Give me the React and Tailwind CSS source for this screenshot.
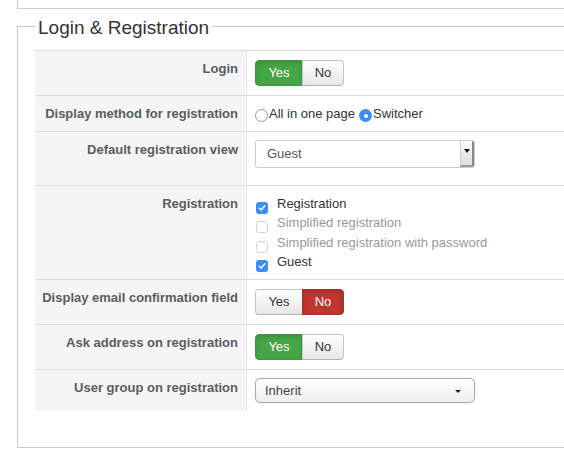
import React from "react";

const font = { fontFamily: '"Liberation Sans", Arial, Helvetica, sans-serif' };

function Toggle({ value }) {
  const yesOn = value === "yes";
  const base =
    "h-[26px] flex items-center justify-center text-[13px] border";
  const off =
    "bg-gradient-to-b from-[#ffffff] to-[#e6e6e6] border-[#c5c5c5] border-b-[#b3b3b3] text-[#333] shadow-[inset_0_1px_0_rgba(255,255,255,0.2)]";
  return (
    <div className="flex">
      <div
        className={`${base} w-[48px] rounded-l-[4px] ${
          yesOn
            ? "bg-[#46a546] border-[#3e963e] text-white shadow-[inset_0_2px_4px_rgba(0,0,0,0.15)]"
            : off
        }`}
      >
        Yes
      </div>
      <div
        className={`${base} w-[42px] -ml-px rounded-r-[4px] ${
          !yesOn
            ? "bg-[#bd362f] border-[#a8302a] text-white shadow-[inset_0_2px_4px_rgba(0,0,0,0.15)]"
            : off
        }`}
      >
        No
      </div>
    </div>
  );
}

function Checkbox({ checked, label }) {
  return (
    <div className="flex items-start h-[19.33px] leading-[19.33px]">
      {checked ? (
        <span className="mt-[8px] ml-[1px] w-[12px] h-[12px] rounded-[3px] bg-[#3b8ef7] flex items-center justify-center">
          <svg width="8" height="8" viewBox="0 0 8 8">
            <path d="M1.3 4.2 L3.2 6 L6.8 1.8" fill="none" stroke="#fff" strokeWidth="1.4" strokeLinecap="round" strokeLinejoin="round" />
          </svg>
        </span>
      ) : (
        <span className="mt-[8px] ml-[1px] w-[12px] h-[12px] rounded-[3px] bg-white border border-[#d4d4d4]" />
      )}
      <span className={`ml-[9px] text-[13px] ${checked ? "text-[#333]" : "text-[#999]"}`}>
        {label}
      </span>
    </div>
  );
}

function Row({ label, h, first, last, children }) {
  return (
    <div
      className={`flex ${h} ${first ? "border-t border-[#dddddd]" : ""} ${
        last ? "" : "border-b border-[#dddddd]"
      }`}
    >
      <div className="w-[212px] shrink-0 bg-[#f5f5f5] border-r border-[#e6e6e6] pr-[8px] pt-[9px] text-right text-[13px] leading-[18px] font-bold text-[#5c5c5c]">
        {label}
      </div>
      <div className="flex-1 pl-[8px]">{children}</div>
    </div>
  );
}

export default function App() {
  return (
    <div className="w-[564px] h-[452px] overflow-hidden bg-white" style={font}>
      <div className="ml-[17px] w-[640px]">
        {/* panel above */}
        <div className="h-[9px] border-l border-b border-[#cccccc]" />

        {/* fieldset legend */}
        <div className="flex h-[28px] mt-[3px]">
          <div className="mt-[14px] w-[18px] border-l border-t border-[#cccccc]" />
          <div className="pt-[4px] px-[3px] text-[19px] leading-[24px] text-[#333] whitespace-nowrap">
            Login &amp; Registration
          </div>
          <div className="mt-[14px] flex-1 border-t border-[#cccccc]" />
        </div>

        {/* fieldset body */}
        <div className="border-l border-b border-[#cccccc] pl-[17px] pt-[10px] pb-[36px]">
          <Row label="Login" h="h-[46px]" first>
            <div className="pt-[9px]">
              <Toggle value="yes" />
            </div>
          </Row>

          <Row label="Display method for registration" h="h-[36px]">
            <div className="pt-[9px] flex items-start text-[13px] leading-[18px] text-[#333]">
              <span className="mt-[4px] w-[13px] h-[13px] rounded-full border border-[#9a9a9a] bg-white shrink-0" />
              <span className="ml-[1px]">All in one page</span>
              <span className="ml-[4px] mt-[4px] w-[13px] h-[13px] rounded-full bg-[#3b8ef7] flex items-center justify-center shrink-0">
                <span className="w-[4px] h-[4px] rounded-full bg-white" />
              </span>
              <span className="ml-[1px]">Switcher</span>
            </div>
          </Row>

          <Row label="Default registration view" h="h-[54px]">
            <div className="pt-[8px]">
              <div className="w-[220px] h-[28px] flex items-stretch border border-[#cccccc] rounded-[3px] bg-white">
                <div className="flex-1 flex items-center pl-[11px] text-[13px] text-[#555]">
                  Guest
                </div>
                <div className="w-[14px] bg-gradient-to-b from-[#fafafa] to-[#dedede] border-l border-[#cfcfcf] border-r-2 border-b-2 border-r-[#8a8a8a] border-b-[#9a9a9a] rounded-r-[2px] flex justify-center pt-[8px]">
                  <svg width="6" height="4" viewBox="0 0 6 4">
                    <path d="M0 0 H6 L3 4 Z" fill="#111" />
                  </svg>
                </div>
              </div>
            </div>
          </Row>

          <Row label="Registration" h="h-[94px]">
            <div className="pt-[8px]">
              <Checkbox checked label="Registration" />
              <Checkbox label="Simplified registration" />
              <Checkbox label="Simplified registration with password" />
              <Checkbox checked label="Guest" />
            </div>
          </Row>

          <Row label="Display email confirmation field" h="h-[45px]">
            <div className="pt-[9px]">
              <Toggle value="no" />
            </div>
          </Row>

          <Row label="Ask address on registration" h="h-[45px]">
            <div className="pt-[9px]">
              <Toggle value="yes" />
            </div>
          </Row>

          <Row label="User group on registration" h="h-[41px]" last>
            <div className="pt-[8px]">
              <div className="w-[220px] h-[25px] flex items-center justify-between pl-[9px] pr-[13px] border border-[#aaaaaa] rounded-[5px] bg-gradient-to-b from-[#ffffff] via-[#f6f6f6] to-[#eeeeee] shadow-[0_0_3px_rgba(0,0,0,0.1)] text-[13px] text-[#444]">
                <span className="pt-[1px]">Inherit</span>
                <svg width="6" height="3" viewBox="0 0 6 3" className="mt-[2px]">
                  <path d="M0 0 H6 L3 3 Z" fill="#222" />
                </svg>
              </div>
            </div>
          </Row>
        </div>
      </div>
    </div>
  );
}
